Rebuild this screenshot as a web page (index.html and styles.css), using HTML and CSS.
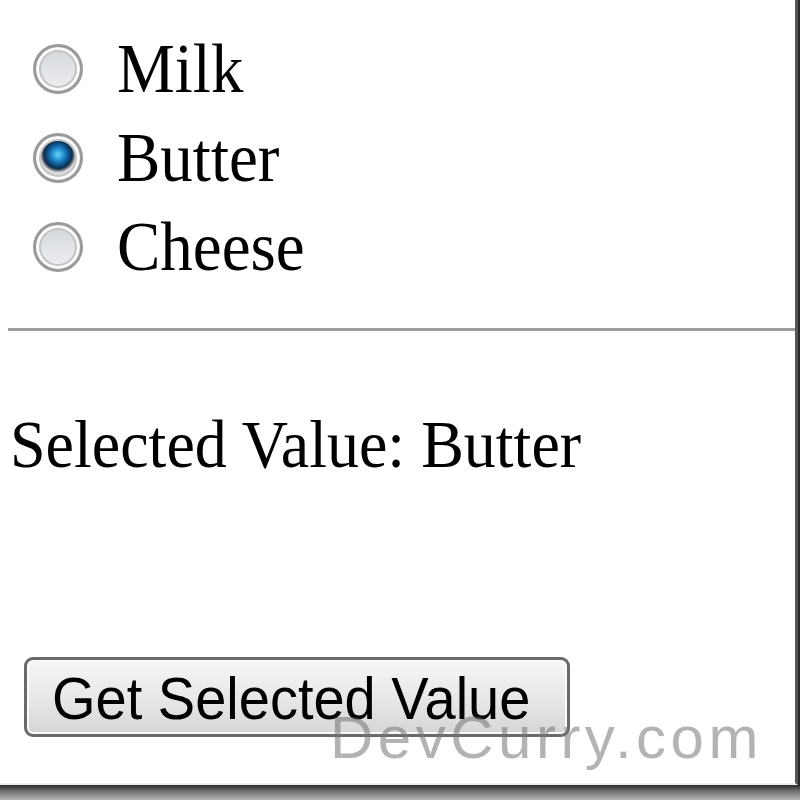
FILE: index.html
```html
<!DOCTYPE html>
<html>
<head>
<meta charset="utf-8">
<link rel="stylesheet" href="styles.css">
</head>
<body>
<div class="frame">
  <div class="options">
    <label class="option"><span class="radio"></span><span class="label">Milk</span></label>
    <label class="option"><span class="radio checked"></span><span class="label">Butter</span></label>
    <label class="option"><span class="radio"></span><span class="label">Cheese</span></label>
  </div>
  <hr class="rule">
  <p class="result">Selected Value: Butter</p>
  <button class="btn"><span class="btn-text">Get Selected Value</span></button>
  <div class="watermark">DevCurry.com</div>
</div>
</body>
</html>
```
FILE: styles.css
```css
html, body {
  margin: 0;
  padding: 0;
}
body {
  width: 800px;
  height: 800px;
  overflow: hidden;
  background: linear-gradient(to bottom, #2a2a2a 785px, #6e6e6e 791px, #b4b4b4 800px);
}
.frame {
  position: relative;
  box-sizing: border-box;
  width: 798px;
  height: 785px;
  background: #fff;
  border-right: 3px solid #555;
  border-bottom: 2px solid #f0f0f0;
  display: flex;
  flex-direction: column;
  align-items: flex-start;
  font-family: "Liberation Serif", "Times New Roman", serif;
  color: #000;
}
.options {
  padding: 24px 0 0 33px;
  display: flex;
  flex-direction: column;
}
.option {
  height: 89px;
  display: flex;
  align-items: center;
}
.radio {
  box-sizing: border-box;
  width: 50px;
  height: 50px;
  border-radius: 50%;
  border: 3px solid #9a9a9a;
  box-shadow: inset 0 0 0 3px #fbfbfb, inset 0 0 0 5px #c4c4c4;
  background: linear-gradient(#d3d6db, #eef0f2);
  margin-right: 34px;
  flex: none;
}
.radio.checked {
  background: radial-gradient(circle at 50% 42%, #6ad0f4 0, #2a9ad8 5px, #0e5a96 10px, #0c2c4a 14px, #6a6f78 16px, #d8dadd 18px);
}
.label {
  display: inline-block;
  font-size: 65px;
  line-height: 89px;
  transform: scaleY(1.07);
}
.rule {
  box-sizing: border-box;
  align-self: stretch;
  margin: 37px 0 0 8px;
  height: 3px;
  border: none;
  background: #9c9c9c;
}
.result {
  margin: 74px 0 0 10px;
  font-size: 64px;
  line-height: 80px;
  transform: scaleY(1.07);
}
.btn {
  box-sizing: border-box;
  margin: 172px 0 0 24px;
  width: 546px;
  height: 80px;
  padding: 3px 0 0 25px;
  text-align: left;
  border: 3px solid #6a6a6a;
  border-radius: 9px;
  box-shadow: inset 0 0 0 2px #fafafa;
  background: linear-gradient(#f6f6f6, #e8e8e8 50%, #d6d6d6);
  font-family: "Liberation Sans", Arial, sans-serif;
  font-size: 56px;
  line-height: 72px;
  color: #000;
}
.btn-text {
  display: inline-block;
  transform: scaleY(1.07);
}
.watermark {
  position: absolute;
  left: 330px;
  top: 708px;
  font-family: "Liberation Sans", Arial, sans-serif;
  font-size: 60px;
  line-height: 1;
  letter-spacing: 4.5px;
  color: rgba(120, 115, 115, 0.55);
}
```
